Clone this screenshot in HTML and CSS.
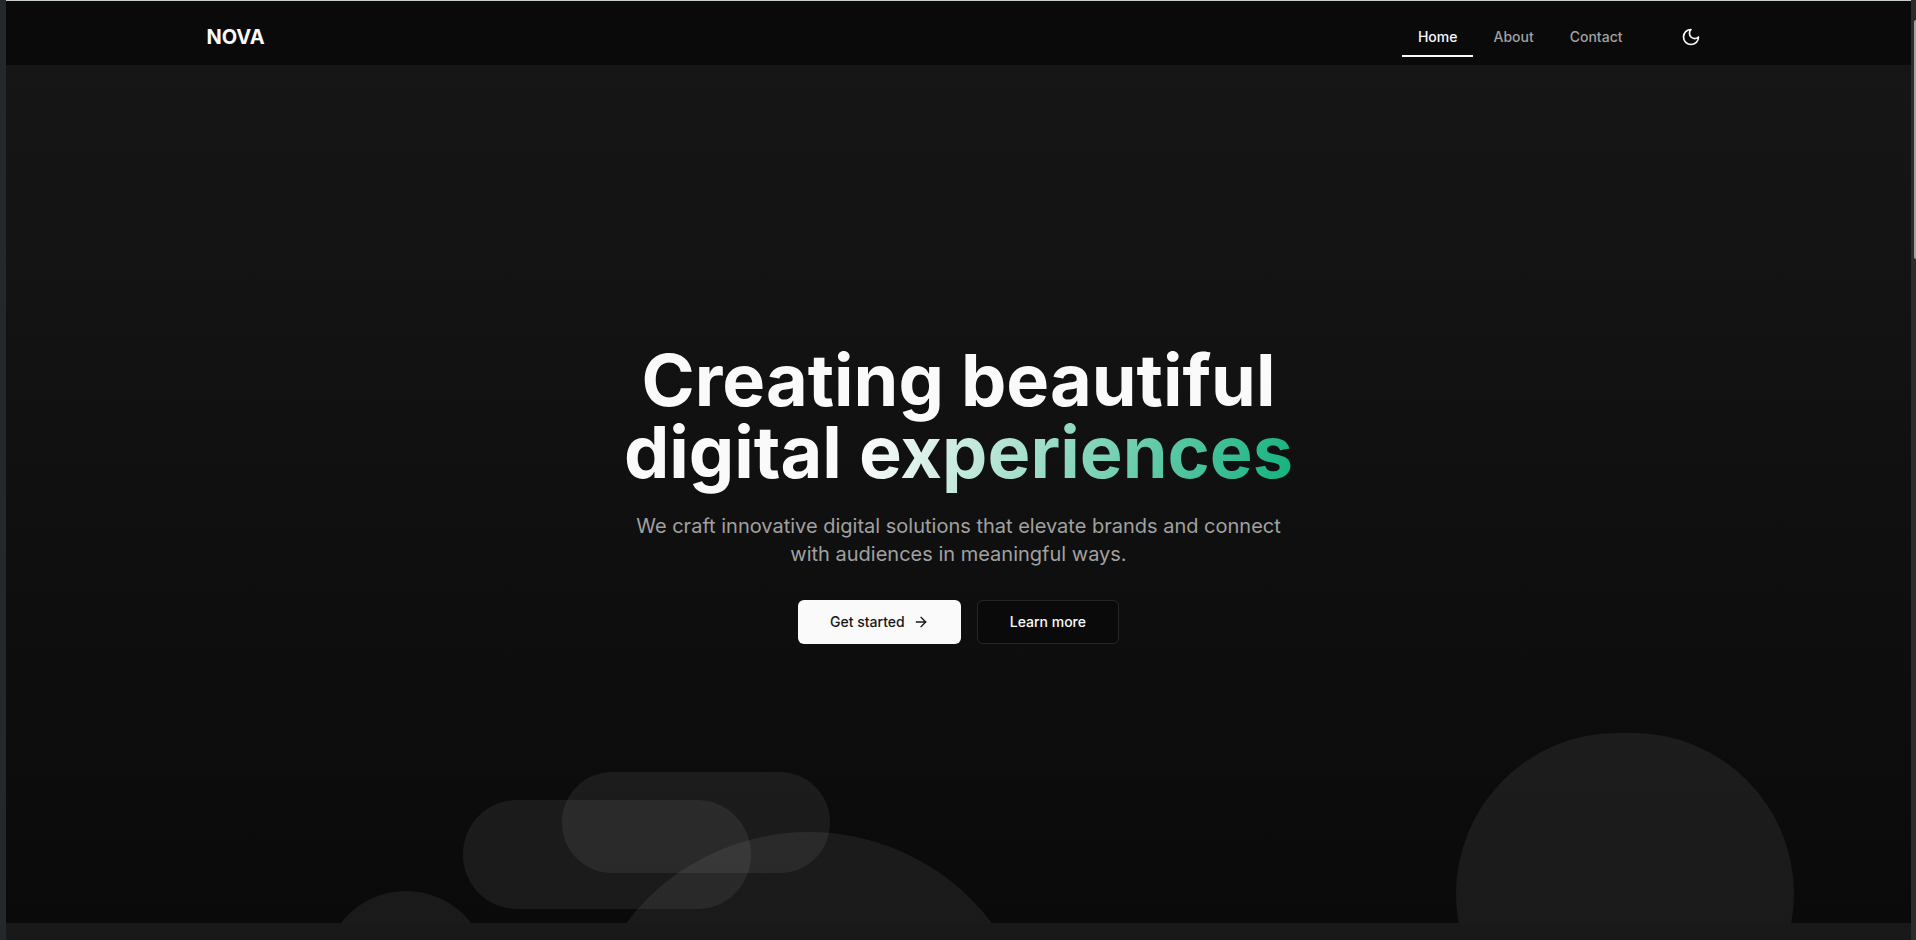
FILE: index.html
```html
<!DOCTYPE html>
<html lang="en">
<head>
<meta charset="utf-8">
<title>NOVA</title>
<link rel="stylesheet" href="styles.css">
</head>
<body>
<div class="window">
  <div class="page">
    <header class="header">
      <div class="header-inner">
        <a class="logo" href="#">NOVA</a>
        <div class="header-end">
          <nav class="nav">
            <a class="nav-link nav-link-active" href="#">Home</a>
            <a class="nav-link" href="#">About</a>
            <a class="nav-link" href="#">Contact</a>
          </nav>
          <button class="theme-toggle" type="button" aria-label="Toggle theme">
            <svg width="20" height="20" viewBox="0 0 24 24" fill="none" stroke="currentColor" stroke-width="2" stroke-linecap="round" stroke-linejoin="round"><path d="M12 3a6 6 0 0 0 9 9 9 9 0 1 1-9-9Z"/></svg>
          </button>
        </div>
      </div>
    </header>
    <main class="hero">
      <svg class="shapes" viewBox="0 0 1905 190" preserveAspectRatio="xMidYMax slice" aria-hidden="true">
        <rect x="457" y="67" width="288" height="109" rx="54"/>
        <rect x="556" y="39" width="268" height="101" rx="50"/>
        <circle cx="803" cy="328" r="229"/>
        <circle cx="400" cy="240" r="82"/>
        <rect x="1450" y="0" width="338" height="322" rx="161"/>
      </svg>
      <div class="hero-content">
        <h1 class="title">Creating beautiful<br>digital <span class="accent">experiences</span></h1>
        <p class="lead">We craft innovative digital solutions that elevate brands and connect with audiences in meaningful ways.</p>
        <div class="actions">
          <button class="button button-primary" type="button">Get started
            <svg width="16" height="16" viewBox="0 0 24 24" fill="none" stroke="currentColor" stroke-width="2" stroke-linecap="round" stroke-linejoin="round"><path d="M5 12h14"/><path d="m12 5 7 7-7 7"/></svg>
          </button>
          <button class="button button-outline" type="button">Learn more</button>
        </div>
      </div>
    </main>
    <section class="next-section"></section>
  </div>
  <div class="scrollbar"><div class="scrollbar-thumb"></div></div>
</div>
</body>
</html>
```

FILE: styles.css
```css
* { box-sizing: border-box; }

body {
  margin: 0;
  background: #0a0a0a;
  color: #fafafa;
  font-family: Inter, "Liberation Sans", sans-serif;
}

.window {
  display: flex;
  min-height: 100vh;
  border-left: 6px solid #23282b;
}

.page {
  flex: 1;
  display: flex;
  flex-direction: column;
  border-top: 1px solid #c9cfcc;
}

.header {
  padding: 16px 0 8px;
  background: #0a0a0a;
}

.header-inner {
  display: flex;
  align-items: center;
  justify-content: space-between;
  max-width: 1536px;
  margin: 0 auto;
  padding: 0 16px;
}

.logo {
  color: #fafafa;
  font-size: 20px;
  line-height: 28px;
  font-weight: 700;
  text-decoration: none;
}

.header-end { display: flex; gap: 32px; }

.nav { display: flex; gap: 4px; }

.nav-link {
  height: 40px;
  padding: 0 16px;
  border-bottom: 2px solid transparent;
  border-top: 2px solid transparent;
  color: #a1a1a1;
  font-size: 14px;
  line-height: 36px;
  font-weight: 500;
  text-decoration: none;
}

.nav-link-active {
  color: #fafafa;
  border-bottom-color: #fafafa;
}

.theme-toggle {
  display: flex;
  align-items: center;
  justify-content: center;
  width: 40px;
  height: 40px;
  padding: 0;
  border: 0;
  background: none;
  color: #fafafa;
}

.hero {
  position: relative;
  flex: 1;
  display: flex;
  align-items: center;
  justify-content: center;
  overflow: hidden;
  background: linear-gradient(to bottom, #161616, #0a0a0a);
}

.shapes {
  position: absolute;
  left: 0;
  bottom: 0;
  width: 100%;
  fill: #fafafa;
  fill-opacity: 0.065;
}

.hero-content {
  position: relative;
  display: flex;
  flex-direction: column;
  align-items: center;
  text-align: center;
}

.title {
  margin: 0 0 24px;
  font-size: 72px;
  line-height: 72px;
  font-weight: 700;
}

.accent {
  background: linear-gradient(110deg, #fafafa 5%, #10b07c);
  -webkit-background-clip: text;
  background-clip: text;
  color: transparent;
}

.lead {
  max-width: 672px;
  margin: 0 0 32px;
  color: #a1a1a1;
  font-size: 20px;
  line-height: 28px;
}

.actions { display: flex; gap: 16px; }

.button {
  display: flex;
  align-items: center;
  gap: 8px;
  height: 44px;
  padding: 0 32px;
  border: 0;
  border-radius: 6px;
  font: 500 14px/20px Inter, "Liberation Sans", sans-serif;
}

.button-primary { background: #fafafa; color: #171717; }

.button-outline {
  border: 1px solid #262626;
  background: #0a0a0a;
  color: #fafafa;
}

.next-section {
  height: 17px;
  background: #191919;
}

.scrollbar {
  width: 5px;
  padding: 20px 0 0 3px;
  background: #2c2c2c;
}

.scrollbar-thumb {
  height: 239px;
  border-radius: 2px 0 0 2px;
  background: #9f9f9f;
}
```
